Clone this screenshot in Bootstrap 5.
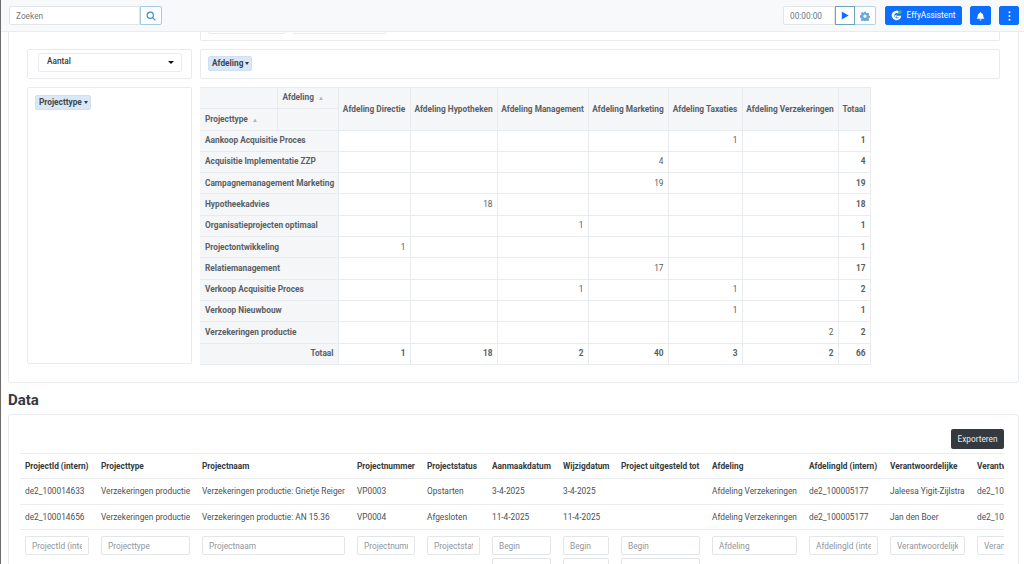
<!DOCTYPE html>
<html lang="nl">
<head>
<meta charset="utf-8">
<title>Rapport</title>
<link rel="stylesheet" href="https://cdn.jsdelivr.net/npm/bootstrap@5.3.0/dist/css/bootstrap.min.css">
<style>
html,body{height:564px;overflow:hidden;background:#fff}
body{font-family:Roboto,"Liberation Sans",sans-serif;font-size:8.3px;color:#495057;border-left:1px solid #6c6c6c}
.topbar{height:32px;background:#f8f9fa;border-bottom:1px solid #e9ecef;padding:0 5px 0 9px;margin-left:-1px}
.topbar .form-control{font-size:8.3px;height:19px;min-height:19px;padding:0 6px;border-color:#e3e6e9;border-radius:2px;color:#6c757d}
.topbar .form-control::placeholder{color:#777}
.search-in{width:131px}
.timer-in{width:52px}
.tb-btn{height:19px;display:flex;align-items:center;justify-content:center;padding:0;font-size:8.3px;border-radius:2px}
.tb-search{width:22px;background:#fff;border:1px solid #a3cbe3;border-radius:0 2px 2px 0}
.tb-play{width:20px;background:#fff;border:1px solid #6aa5b8;border-radius:0}
.tb-gear{width:21px;background:#fff;border:1px solid #b5d3e3;border-left:0;border-radius:0 2px 2px 0}
.tb-effy{width:77px;gap:4px;margin-left:9px}
.tb-sq{width:21px;margin-left:8px}
.tb-sq2{width:20px}
.sheet{padding:0 5px 0 7px}
.panel-a{border:1px solid #e9ecef;border-top:0;border-radius:0 0 3px 3px;height:351px;padding:0 18px}
.pv-grid{display:grid;grid-template-columns:165px 800px;column-gap:8px;row-gap:8px;grid-template-rows:9px 30px 277px}
.pv-box{border:1px solid #e9ecef;border-radius:2px;background:#fff}
.pv-top{border-top:0;height:9px;overflow:hidden;padding:0 7px;display:flex;gap:8px;border-radius:0 0 2px 2px}
.ghost{display:block;height:2px;border:1px solid #e9ecef;border-top:0;border-radius:0 0 3px 3px}
.ghost-a{width:77px}.ghost-b{width:93px}
.pv-sel{display:flex;align-items:center;justify-content:space-between;margin:3px 9px 0 10px;height:19px;border:1px solid #e9ecef;border-radius:2px;padding:0 7px 2px 8px;font-weight:500;color:#343a40}
.caret-x{width:0;height:0;border-left:3px solid transparent;border-right:3px solid transparent;border-top:3.5px solid #111;margin-top:2px}
.chip{display:inline-flex;align-items:center;height:15px;padding:0 2px 1px 3px;background:#d9e7f7;border:1px solid #d0e0f2;border-radius:2px;color:#3f464d;font-weight:700}
.chip::after{content:"";width:0;height:0;border-left:2px solid transparent;border-right:2px solid transparent;border-top:3px solid #343a40;margin-left:2px}
.chip-slot{padding:6px 7px}
.chip-slot2{padding:7px 7px}
.pv-table{table-layout:fixed;width:670px;border-collapse:collapse;color:#5a6066}
.pv-table th,.pv-table td{border:1px solid #e9ecef;padding:0 4px 1px;height:21.3px;white-space:nowrap;overflow:hidden}
.pv-table th{background:#f5f6f7;font-weight:700}
.pv-table thead tr:first-child th,.pv-table tr>*:first-child{border-left:0}
.pv-table thead th.ctr{text-align:center;padding:0}
.pv-table td{text-align:right;background:#fff}
.pv-table td.tot{font-weight:700}
.pv-table .rlab{padding-left:5px;text-align:left}
.pv-table .trow{text-align:right}
.arrow{font-size:6px;color:#adb5bd;margin-left:2px;font-weight:400}
.c1{width:77px}.c2{width:61px}.c3{width:72px}.c4{width:87px}.c5{width:91px}.c6{width:80px}.c7{width:74px}.c8{width:96px}.c9{width:32px}
.data-title{font-size:15px;font-weight:700;color:#343a40;margin:0;height:31px;line-height:35px}
.panel-b{border:1px solid #e9ecef;border-radius:3px;height:200px;padding:14px 14px 0 11px}
.exp-row{height:24px;display:flex;justify-content:flex-end}
.exp-btn{height:20px;width:53px;padding:0;font-size:8.3px;border-radius:2px;background:#343a40;color:#e9ecef;border:0}
.clip{overflow:hidden}
.dt{table-layout:fixed;width:1060px;margin:0;border-collapse:collapse;color:#495057;--bs-table-color:#495057}
.dt th,.dt td{padding:0 5px;white-space:nowrap;overflow:hidden;vertical-align:middle;border-color:#e9ecef;box-shadow:none}
.dt thead th{height:25px;border-top:1px solid #e9ecef;border-bottom:1px solid #e9ecef;color:#343a40;font-weight:700;font-size:8.3px}
.dt tbody td{height:25.5px;font-size:8.3px;border-bottom:1px solid #e9ecef}
.dt tfoot td{vertical-align:top;padding:6px 7px 0 5px;border:0;border-top:1px solid #dee2e6}
.dt .form-control{height:19px;min-height:19px;font-size:8.3px;padding:0 6px;border:1px solid #e3e6e9;border-radius:2px;margin-bottom:3px}
.dt .form-control::placeholder{color:#8f959b}
.d1{width:76px}.d2{width:101px}.d3{width:155px}.d4{width:70px}.d5{width:65px}.d6{width:71px}.d7{width:58px}.d8{width:91px}.d9{width:97px}.d10{width:81px}.d11{width:87px}.d12{width:108px}
</style>
</head>
<body>
<nav class="navbar topbar d-flex flex-nowrap align-items-center justify-content-start">
  <div class="d-flex">
    <input class="form-control search-in rounded-end-0" placeholder="Zoeken" type="text">
    <button class="btn tb-btn tb-search" type="button" aria-label="Zoeken">
      <svg width="10" height="10" viewBox="0 0 16 16" fill="none" stroke="#3d8fc4" stroke-width="1.9"><circle cx="6.8" cy="6.8" r="5"/><path d="M10.6 10.6 15 15"/></svg>
    </button>
  </div>
  <div class="d-flex ms-auto">
    <input class="form-control timer-in rounded-end-0" value="00:00:00" type="text">
    <button class="btn tb-btn tb-play" type="button" aria-label="Start">
      <svg width="8" height="9" viewBox="0 0 8 9"><path d="M.8.6 7.6 4.5.8 8.4z" fill="#0d6efd"/></svg>
    </button>
    <button class="btn tb-btn tb-gear" type="button" aria-label="Instellingen">
      <svg width="10" height="10" viewBox="0 0 16 16"><path fill="#6aa8dc" fill-rule="evenodd" d="M6.6 1h2.8l.4 2 1.3.6 1.8-1.1 2 2-1.1 1.8.6 1.3 2 .4v2.800l-2 .4-.6 1.300 1.100 1.800-2 2-1.800-1.100-1.300.6-.4 2H6.600l-.4-2-1.300-.6-1.800 1.100-2-2 1.100-1.800-.6-1.300-2-.4V7l2-.4.6-1.300L1.500 3.500l2-2 1.800 1.100 1.300-.6zM8 5.600a2.600 2.600 0 1 0 0 5.200 2.600 2.600 0 0 0 0-5.200z"/></svg>
    </button>
    <button class="btn btn-primary tb-btn tb-effy" type="button">
      <svg width="11" height="11" viewBox="0 0 16 16"><path d="M13.200 3.200A7 7 0 1 0 15 8.200H8.600v2.600h3.200A4 4 0 1 1 8 4.200c1 0 1.900.3 2.700.9z" fill="#fff"/><path d="M5.500 8.500 8 6.500v4.500H5.500z" fill="#fff"/><circle cx="13" cy="3" r="2.700" fill="#3fb56b"/></svg>
      <span>EffyAssistent</span>
    </button>
    <button class="btn btn-primary tb-btn tb-sq" type="button" aria-label="Meldingen">
      <svg width="9" height="10" viewBox="0 0 16 16"><path fill="#fff" d="M8 16a2 2 0 0 0 2-2H6a2 2 0 0 0 2 2zM8 1a1 1 0 0 0-1 1v.6A5 5 0 0 0 3 7.500c0 1.500-.5 3.700-2 5.500h14c-1.500-1.800-2-4-2-5.500a5 5 0 0 0-4-4.900V2a1 1 0 0 0-1-1z"/></svg>
    </button>
    <button class="btn btn-primary tb-btn tb-sq tb-sq2" type="button" aria-label="Menu">
      <svg width="3" height="10" viewBox="0 0 3 11"><circle cx="1.500" cy="1.500" r="1.100" fill="#fff"/><circle cx="1.500" cy="5.500" r="1.100" fill="#fff"/><circle cx="1.500" cy="9.500" r="1.100" fill="#fff"/></svg>
    </button>
  </div>
</nav>

<main class="sheet">
  <section class="panel-a">
    <div class="pv-grid">
      <div></div>
      <div class="pv-box pv-top"><span class="ghost ghost-a"></span><span class="ghost ghost-b"></span></div>

      <div class="pv-box"><div class="pv-sel"><span>Aantal</span><span class="caret-x"></span></div></div>
      <div class="pv-box chip-slot"><span class="chip">Afdeling</span></div>

      <div class="pv-box chip-slot2"><span class="chip">Projecttype</span></div>
      <div>
        <table class="pv-table">
          <colgroup><col class="c1"><col class="c2"><col class="c3"><col class="c4"><col class="c5"><col class="c6"><col class="c7"><col class="c8"><col class="c9"></colgroup>
          <thead>
            <tr><th></th><th class="rlab">Afdeling <span class="arrow">▲</span></th><th rowspan="2" class="ctr">Afdeling Directie</th><th rowspan="2" class="ctr">Afdeling Hypotheken</th><th rowspan="2" class="ctr">Afdeling Management</th><th rowspan="2" class="ctr">Afdeling Marketing</th><th rowspan="2" class="ctr">Afdeling Taxaties</th><th rowspan="2" class="ctr">Afdeling Verzekeringen</th><th rowspan="2" class="ctr">Totaal</th></tr>
            <tr><th class="rlab">Projecttype <span class="arrow">▲</span></th><th></th></tr>
          </thead>
          <tbody>
            <tr><th colspan="2" class="rlab">Aankoop Acquisitie Proces</th><td></td><td></td><td></td><td></td><td>1</td><td></td><td class="tot">1</td></tr>
            <tr><th colspan="2" class="rlab">Acquisitie Implementatie ZZP</th><td></td><td></td><td></td><td>4</td><td></td><td></td><td class="tot">4</td></tr>
            <tr><th colspan="2" class="rlab">Campagnemanagement Marketing</th><td></td><td></td><td></td><td>19</td><td></td><td></td><td class="tot">19</td></tr>
            <tr><th colspan="2" class="rlab">Hypotheekadvies</th><td></td><td>18</td><td></td><td></td><td></td><td></td><td class="tot">18</td></tr>
            <tr><th colspan="2" class="rlab">Organisatieprojecten optimaal</th><td></td><td></td><td>1</td><td></td><td></td><td></td><td class="tot">1</td></tr>
            <tr><th colspan="2" class="rlab">Projectontwikkeling</th><td>1</td><td></td><td></td><td></td><td></td><td></td><td class="tot">1</td></tr>
            <tr><th colspan="2" class="rlab">Relatiemanagement</th><td></td><td></td><td></td><td>17</td><td></td><td></td><td class="tot">17</td></tr>
            <tr><th colspan="2" class="rlab">Verkoop Acquisitie Proces</th><td></td><td></td><td>1</td><td></td><td>1</td><td></td><td class="tot">2</td></tr>
            <tr><th colspan="2" class="rlab">Verkoop Nieuwbouw</th><td></td><td></td><td></td><td></td><td>1</td><td></td><td class="tot">1</td></tr>
            <tr><th colspan="2" class="rlab">Verzekeringen productie</th><td></td><td></td><td></td><td></td><td></td><td>2</td><td class="tot">2</td></tr>
            <tr><th colspan="2" class="trow">Totaal</th><td class="tot">1</td><td class="tot">18</td><td class="tot">2</td><td class="tot">40</td><td class="tot">3</td><td class="tot">2</td><td class="tot">66</td></tr>
          </tbody>
        </table>
      </div>
    </div>
  </section>

  <h2 class="data-title">Data</h2>

  <section class="panel-b">
    <div class="exp-row"><button class="btn exp-btn" type="button">Exporteren</button></div>
    <div class="clip">
      <table class="table dt">
        <colgroup><col class="d1"><col class="d2"><col class="d3"><col class="d4"><col class="d5"><col class="d6"><col class="d7"><col class="d8"><col class="d9"><col class="d10"><col class="d11"><col class="d12"></colgroup>
        <thead><tr><th>ProjectId (intern)</th><th>Projecttype</th><th>Projectnaam</th><th>Projectnummer</th><th>Projectstatus</th><th>Aanmaakdatum</th><th>Wijzigdatum</th><th>Project uitgesteld tot</th><th>Afdeling</th><th>AfdelingId (intern)</th><th>Verantwoordelijke</th><th>Verantwoordelijke (intern)</th></tr></thead>
        <tbody>
          <tr><td>de2_100014633</td><td>Verzekeringen productie</td><td>Verzekeringen productie: Grietje Reiger</td><td>VP0003</td><td>Opstarten</td><td>3-4-2025</td><td>3-4-2025</td><td></td><td>Afdeling Verzekeringen</td><td>de2_100005177</td><td>Jaleesa Yigit-Zijlstra</td><td>de2_100005200</td></tr>
          <tr><td>de2_100014656</td><td>Verzekeringen productie</td><td>Verzekeringen productie: AN 15.36</td><td>VP0004</td><td>Afgesloten</td><td>11-4-2025</td><td>11-4-2025</td><td></td><td>Afdeling Verzekeringen</td><td>de2_100005177</td><td>Jan den Boer</td><td>de2_100005201</td></tr>
        </tbody>
        <tfoot>
          <tr>
            <td><input class="form-control" placeholder="ProjectId (intern)"></td>
            <td><input class="form-control" placeholder="Projecttype"></td>
            <td><input class="form-control" placeholder="Projectnaam"></td>
            <td><input class="form-control" placeholder="Projectnummer"></td>
            <td><input class="form-control" placeholder="Projectstatus"></td>
            <td><input class="form-control" placeholder="Begin"><input class="form-control" placeholder="Eind"></td>
            <td><input class="form-control" placeholder="Begin"><input class="form-control" placeholder="Eind"></td>
            <td><input class="form-control" placeholder="Begin"><input class="form-control" placeholder="Eind"></td>
            <td><input class="form-control" placeholder="Afdeling"></td>
            <td><input class="form-control" placeholder="AfdelingId (intern)"></td>
            <td><input class="form-control" placeholder="Verantwoordelijke"></td>
            <td><input class="form-control" placeholder="Verantwoordelijke"></td>
          </tr>
        </tfoot>
      </table>
    </div>
  </section>
</main>
<script src="https://cdn.jsdelivr.net/npm/bootstrap@5.3.0/dist/js/bootstrap.bundle.min.js"></script>
</body>
</html>
